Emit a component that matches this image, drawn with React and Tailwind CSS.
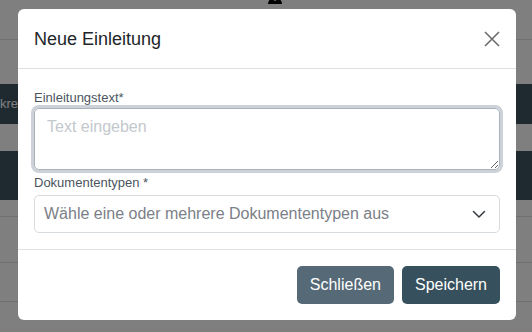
import { useState } from 'react';

function CloseIcon() {
  return (
    <svg width="16" height="16" viewBox="0 0 16 16" fill="none">
      <path d="M1 1L15 15M15 1L1 15" stroke="#6c6c6c" strokeWidth="1.6" />
    </svg>
  );
}

function Chevron() {
  return (
    <svg width="14" height="14" viewBox="0 0 14 14" fill="none">
      <path d="M1.5 4.5l5.5 5.5 5.5-5.5" stroke="#343a40" strokeWidth="1.5" strokeLinecap="round" strokeLinejoin="round" />
    </svg>
  );
}

export default function App() {
  const [text, setText] = useState('');

  return (
    <div className="relative w-[532px] h-[332px] overflow-hidden bg-white" style={{ fontFamily: '"Liberation Sans", Arial, sans-serif' }}>

      {/* Page behind the dialog */}
      <div className="flex flex-col">
        <div className="h-[40px] border-b border-[#dedede] flex justify-center">
          <svg width="16" height="16" viewBox="0 0 16 16" className="-mt-[12px] ml-[18px]">
            <path d="M1 16c0-3 2-5 4-5l3 2 3-2c2 0 4 2 4 5z" fill="#000" />
          </svg>
        </div>
        <div className="h-[44px]" />
        <div className="h-[40px] bg-[#3d5561] flex items-center">
          <span className="text-[13px] text-white">kre</span>
        </div>
        <div className="h-[27px]" />
        <div className="h-[49px] bg-[#3d5561]" />
        <div className="h-[17px] border-b border-[#dedede]" />
        <div className="h-[46px] border-b border-[#dedede]" />
        <div className="h-[39px] border-b border-[#dedede]" />
      </div>

      {/* Overlay + dialog */}
      <div className="absolute inset-0 bg-black/50 flex items-start pl-[18px] pt-[9px]">
        <div className="w-[498px] bg-white rounded-[6px] flex flex-col">

          {/* Header */}
          <div className="h-[60px] border-b border-[#dee2e6] flex items-center justify-between pl-[16px] pr-[16px]">
            <h5 className="text-[18px] text-[#212529] leading-none">Neue Einleitung</h5>
            <button className="w-[16px] h-[16px] flex items-center justify-center">
              <CloseIcon />
            </button>
          </div>

          {/* Body */}
          <div className="px-[16px] pt-[21px] pb-[16px] flex flex-col">
            <label className="text-[13px] leading-[16px] text-[#4b5560]">Einleitungstext*</label>
            <textarea
              value={text}
              onChange={e => setText(e.target.value)}
              placeholder="Text eingeben"
              className="mt-[2px] h-[62px] w-full rounded-[5px] border border-[#aab3bb] px-[12px] py-[6px] text-[16px] leading-[24px] text-[#212529] placeholder:text-[#c3c8cd] outline-none ring-[3px] ring-[#ccd2d7]"
            />
            <label className="mt-[5px] text-[13px] leading-[16px] text-[#4b5560]">Dokumententypen *</label>
            <div className="mt-[4px] h-[38px] rounded-[5px] border border-[#d6dbe0] flex items-center justify-between pl-[9px] pr-[13px]">
              <span className="text-[16px] text-[#7b8087]">Wähle eine oder mehrere Dokumententypen aus</span>
              <Chevron />
            </div>
          </div>

          {/* Footer */}
          <div className="border-t border-[#dee2e6] p-[16px] flex justify-end gap-[8px]">
            <button className="h-[38px] px-[13px] rounded-[5px] bg-[#566977] text-white text-[16px]">Schließen</button>
            <button className="h-[38px] px-[13px] rounded-[5px] bg-[#37505d] text-white text-[16px]">Speichern</button>
          </div>

        </div>
      </div>
    </div>
  );
}
